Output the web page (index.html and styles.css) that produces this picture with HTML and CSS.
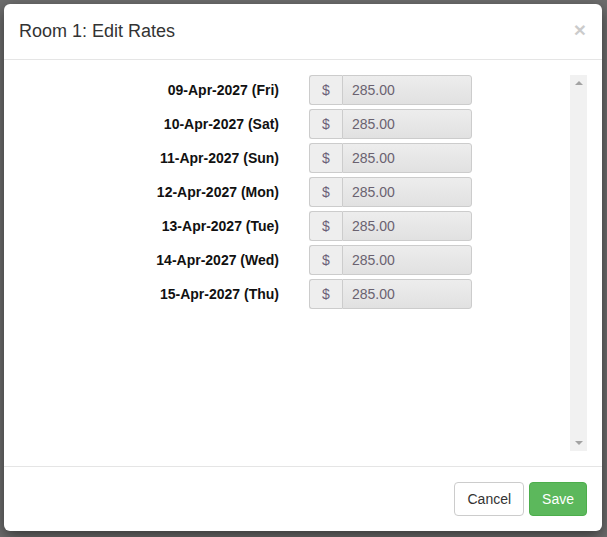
FILE: index.html
```html
<!DOCTYPE html>
<html>
<head>
<meta charset="utf-8">
<link rel="stylesheet" href="styles.css">
</head>
<body>
<div class="backdrop">
  <div class="modal">
    <div class="modal-header">
      <h4 class="modal-title">Room 1: Edit Rates</h4>
      <span class="close">×</span>
    </div>
    <div class="modal-body">
      <div class="scroller">
        <div class="rates">
          <div class="rate-row"><label class="rate-label">09-Apr-2027 (Fri)</label><div class="input-group"><span class="addon">$</span><span class="field">285.00</span></div></div>
          <div class="rate-row"><label class="rate-label">10-Apr-2027 (Sat)</label><div class="input-group"><span class="addon">$</span><span class="field">285.00</span></div></div>
          <div class="rate-row"><label class="rate-label">11-Apr-2027 (Sun)</label><div class="input-group"><span class="addon">$</span><span class="field">285.00</span></div></div>
          <div class="rate-row"><label class="rate-label">12-Apr-2027 (Mon)</label><div class="input-group"><span class="addon">$</span><span class="field">285.00</span></div></div>
          <div class="rate-row"><label class="rate-label">13-Apr-2027 (Tue)</label><div class="input-group"><span class="addon">$</span><span class="field">285.00</span></div></div>
          <div class="rate-row"><label class="rate-label">14-Apr-2027 (Wed)</label><div class="input-group"><span class="addon">$</span><span class="field">285.00</span></div></div>
          <div class="rate-row"><label class="rate-label">15-Apr-2027 (Thu)</label><div class="input-group"><span class="addon">$</span><span class="field">285.00</span></div></div>
        </div>
        <div class="scrollbar">
          <span class="arrow up"></span>
          <span class="arrow down"></span>
        </div>
      </div>
    </div>
    <div class="modal-footer">
      <button class="btn btn-default">Cancel</button>
      <button class="btn btn-success">Save</button>
    </div>
  </div>
</div>
</body>
</html>
```
FILE: styles.css
```css
html, body {
  margin: 0;
  padding: 0;
  height: 100%;
}
body {
  font-family: "Liberation Sans", Arial, sans-serif;
  font-size: 14px;
  color: #333;
  background: #6e6e6e;
  overflow: hidden;
}
.backdrop {
  padding: 4px 5px 0 4px;
}
.modal {
  width: 598px;
  height: 527px;
  background: #fff;
  border-radius: 6px;
  box-shadow: 0 5px 15px rgba(0,0,0,.5);
  display: flex;
  flex-direction: column;
  box-sizing: border-box;
}
.modal-header {
  height: 56px;
  box-sizing: border-box;
  padding: 15px;
  border-bottom: 1px solid #e5e5e5;
  display: flex;
  align-items: center;
  justify-content: space-between;
}
.modal-title {
  margin: 0;
  font-size: 18px;
  font-weight: normal;
  color: #333;
  line-height: 1.42857;
}
.close {
  font-size: 21px;
  font-weight: bold;
  color: #000;
  opacity: .2;
  line-height: 1;
  margin-top: -4px;
  margin-right: 1px;
}
.modal-body {
  padding: 15px;
  height: 406px;
  box-sizing: border-box;
}
.scroller {
  height: 376px;
  display: flex;
}
.rates {
  flex: 1;
}
.rate-row {
  display: flex;
  align-items: center;
  height: 30px;
  margin-bottom: 4px;
}
.rate-label {
  width: 260px;
  text-align: right;
  font-weight: bold;
  color: #111;
  font-size: 14px;
}
.input-group {
  margin-left: 30px;
  width: 163px;
  height: 30px;
  display: flex;
  box-sizing: border-box;
}
.addon {
  width: 33px;
  box-sizing: border-box;
  background: #eee;
  border: 1px solid #ccc;
  border-right: 0;
  border-radius: 3px 0 0 3px;
  color: #6b5f78;
  display: flex;
  align-items: center;
  justify-content: center;
}
.field {
  flex: 1;
  box-sizing: border-box;
  border: 1px solid #ccc;
  border-radius: 0 3px 3px 0;
  background: linear-gradient(#ededed, #e1e1e1);
  color: #6a6270;
  padding: 0 9px;
  display: flex;
  align-items: center;
}
.scrollbar {
  width: 17px;
  background: #f1f1f1;
  display: flex;
  flex-direction: column;
  justify-content: space-between;
  align-items: center;
  padding: 6px 0;
  box-sizing: border-box;
}
.arrow {
  width: 0;
  height: 0;
  border-left: 4px solid transparent;
  border-right: 4px solid transparent;
}
.arrow.up {
  border-bottom: 4px solid #a3a3a3;
}
.arrow.down {
  border-top: 4px solid #a3a3a3;
}
.modal-footer {
  border-top: 1px solid #e5e5e5;
  padding: 15px;
  display: flex;
  justify-content: flex-end;
  gap: 5px;
}
.btn {
  font-family: inherit;
  font-size: 14px;
  height: 34px;
  padding: 6px 12px;
  border-radius: 4px;
  border: 1px solid #ccc;
  line-height: 20px;
  margin: 0;
}
.btn-default {
  background: #fff;
  color: #333;
}
.btn-success {
  background: #5cb85c;
  border-color: #4cae4c;
  color: #fff;
}
```
